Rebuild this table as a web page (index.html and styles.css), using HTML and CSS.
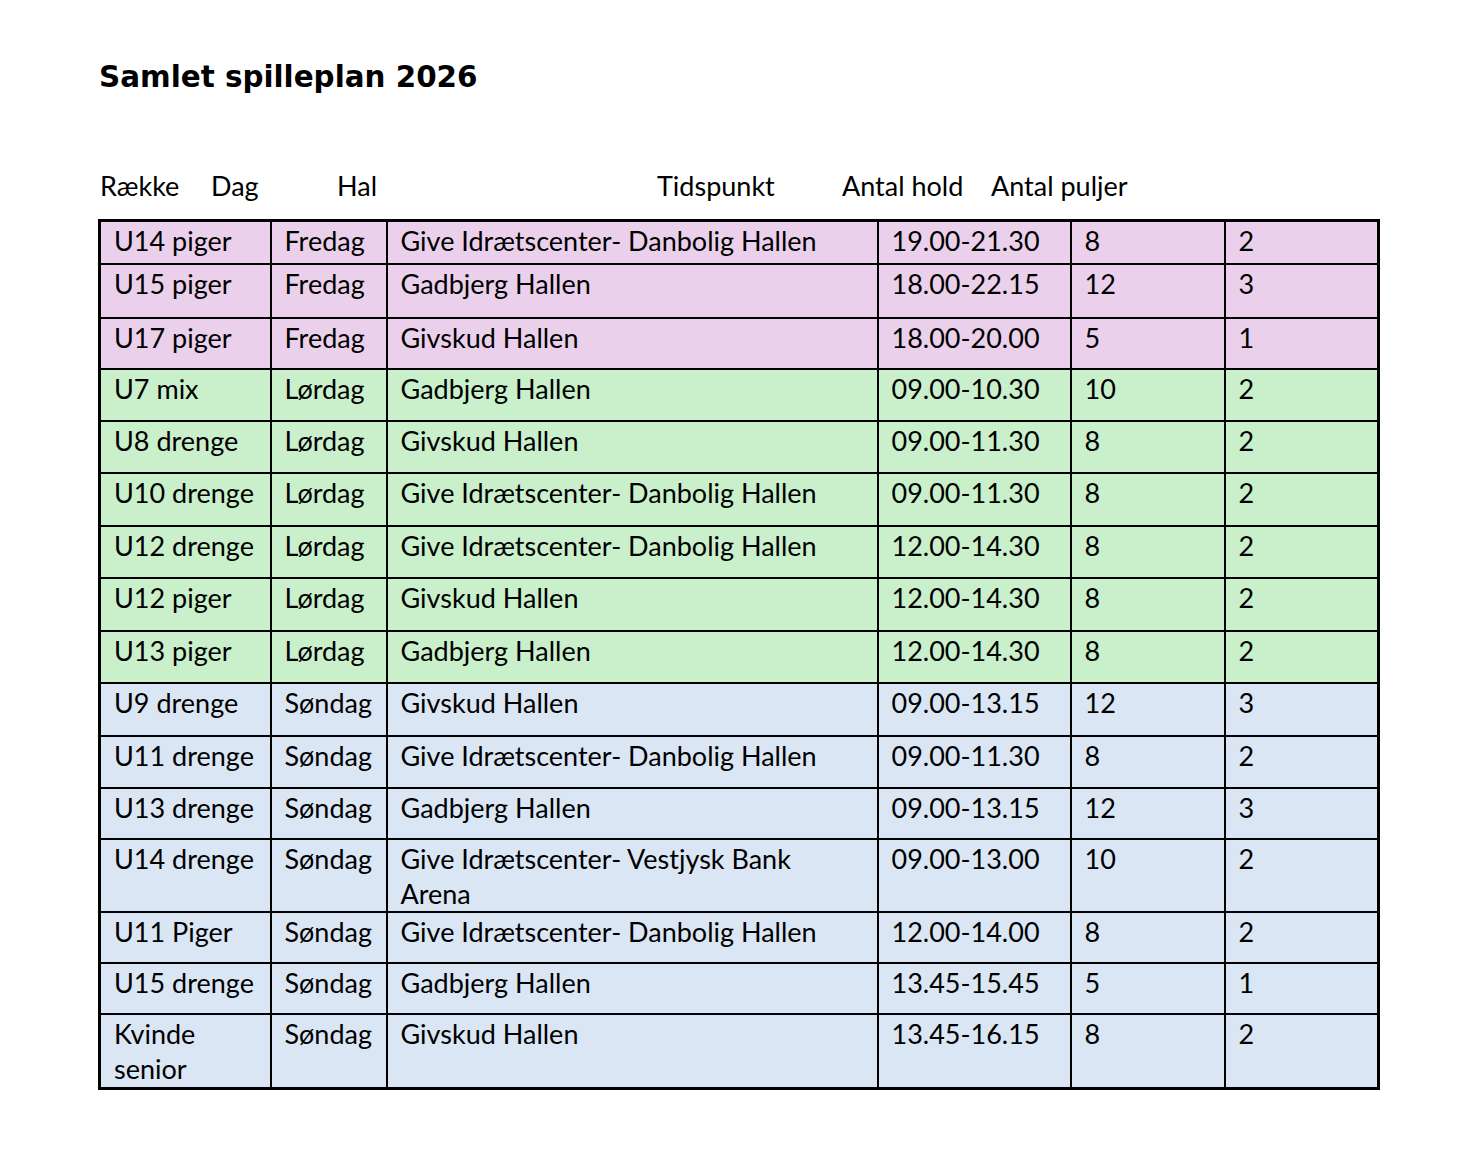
FILE: index.html
```html
<!DOCTYPE html>
<html lang="da">
<head>
<meta charset="utf-8">
<title>Samlet spilleplan 2026</title>
<link rel="stylesheet" href="styles.css">
</head>
<body>
<main class="page">
  <h1 class="title">Samlet spilleplan 2026</h1>
  <div class="heads">
    <span class="h h-raekke">Række</span>
    <span class="h h-dag">Dag</span>
    <span class="h h-hal">Hal</span>
    <span class="h h-tid">Tidspunkt</span>
    <span class="h h-hold">Antal hold</span>
    <span class="h h-pul">Antal puljer</span>
  </div>
  <table class="plan">
    <colgroup>
      <col class="c1"><col class="c2"><col class="c3"><col class="c4"><col class="c5"><col class="c6">
    </colgroup>
    <tbody>
      <tr class="pink r43"><td>U14 piger</td><td>Fredag</td><td>Give Idrætscenter- Danbolig Hallen</td><td>19.00-21.30</td><td>8</td><td>2</td></tr>
      <tr class="pink r54"><td>U15 piger</td><td>Fredag</td><td>Gadbjerg Hallen</td><td>18.00-22.15</td><td>12</td><td>3</td></tr>
      <tr class="pink r51"><td>U17 piger</td><td>Fredag</td><td>Givskud Hallen</td><td>18.00-20.00</td><td>5</td><td>1</td></tr>
      <tr class="green r52"><td>U7 mix</td><td>Lørdag</td><td>Gadbjerg Hallen</td><td>09.00-10.30</td><td>10</td><td>2</td></tr>
      <tr class="green r52"><td>U8 drenge</td><td>Lørdag</td><td>Givskud Hallen</td><td>09.00-11.30</td><td>8</td><td>2</td></tr>
      <tr class="green r53"><td>U10 drenge</td><td>Lørdag</td><td>Give Idrætscenter- Danbolig Hallen</td><td>09.00-11.30</td><td>8</td><td>2</td></tr>
      <tr class="green r52"><td>U12 drenge</td><td>Lørdag</td><td>Give Idrætscenter- Danbolig Hallen</td><td>12.00-14.30</td><td>8</td><td>2</td></tr>
      <tr class="green r53"><td>U12 piger</td><td>Lørdag</td><td>Givskud Hallen</td><td>12.00-14.30</td><td>8</td><td>2</td></tr>
      <tr class="green r52"><td>U13 piger</td><td>Lørdag</td><td>Gadbjerg Hallen</td><td>12.00-14.30</td><td>8</td><td>2</td></tr>
      <tr class="blue r53"><td>U9 drenge</td><td>Søndag</td><td>Givskud Hallen</td><td>09.00-13.15</td><td>12</td><td>3</td></tr>
      <tr class="blue r52"><td>U11 drenge</td><td>Søndag</td><td>Give Idrætscenter- Danbolig Hallen</td><td>09.00-11.30</td><td>8</td><td>2</td></tr>
      <tr class="blue r51"><td>U13 drenge</td><td>Søndag</td><td>Gadbjerg Hallen</td><td>09.00-13.15</td><td>12</td><td>3</td></tr>
      <tr class="blue r72"><td>U14 drenge</td><td>Søndag</td><td>Give Idrætscenter- Vestjysk Bank Arena</td><td>09.00-13.00</td><td>10</td><td>2</td></tr>
      <tr class="blue r51"><td>U11 Piger</td><td>Søndag</td><td>Give Idrætscenter- Danbolig Hallen</td><td>12.00-14.00</td><td>8</td><td>2</td></tr>
      <tr class="blue r51"><td>U15 drenge</td><td>Søndag</td><td>Gadbjerg Hallen</td><td>13.45-15.45</td><td>5</td><td>1</td></tr>
      <tr class="blue r75"><td>Kvinde senior</td><td>Søndag</td><td>Givskud Hallen</td><td>13.45-16.15</td><td>8</td><td>2</td></tr>
    </tbody>
  </table>
</main>
</body>
</html>
```
FILE: styles.css
```css
html, body {
  margin: 0;
  padding: 0;
  background: #ffffff;
}

.page {
  padding: 59px 0 40px 98px;
  font-family: Lato, "Liberation Sans", sans-serif;
  color: #000;
}

.title {
  margin: 0;
  font-family: "DejaVu Sans", Verdana, sans-serif;
  font-weight: bold;
  font-size: 29.4px;
  line-height: 36px;
  padding-left: 1px;
}

.heads {
  display: flex;
  margin-top: 73px;
  font-size: 27px;
  line-height: 36px;
}

.h { display: block; white-space: nowrap; }
.h-raekke { width: 111px; padding-left: 2px; }
.h-dag { width: 126px; }
.h-hal { width: 320px; }
.h-tid { width: 185px; }
.h-hold { width: 149px; }

.plan {
  margin-top: 15px;
  border-collapse: collapse;
  table-layout: fixed;
  width: 1279px;
  font-size: 27px;
  line-height: 35px;
  border: 3px solid #000;
}

.c1 { width: 171px; }
.c2 { width: 116px; }
.c3 { width: 491px; }
.c4 { width: 193px; }
.c5 { width: 154px; }
.c6 { width: 154px; }

.plan td {
  border: 2px solid #000;
  vertical-align: top;
  padding: 1px 8px 0 13px;
  box-sizing: border-box;
}

.plan td:nth-child(3) { padding-right: 40px; }

.pink td { background: #ebd0ec; }
.green td { background: #c9efcb; }
.blue td { background: #dbe6f4; }

.r43 { height: 43px; }
.r51 { height: 51px; }
.r52 { height: 52px; }
.r53 { height: 53px; }
.r54 { height: 54px; }
.r72 { height: 72px; }
.r75 { height: 75px; }
```
